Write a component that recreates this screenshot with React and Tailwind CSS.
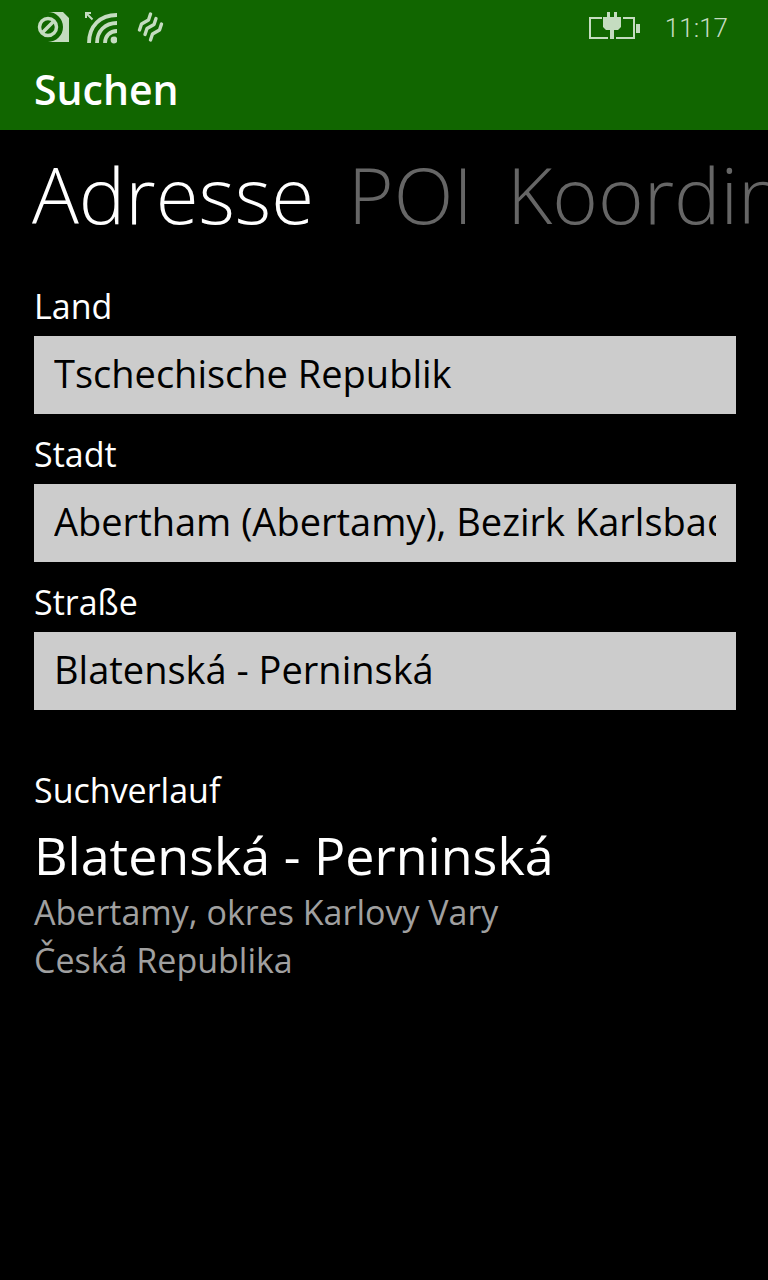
import React from "react";

const fields = [
  { id: "land", label: "Land", value: "Tschechische Republik" },
  { id: "stadt", label: "Stadt", value: "Abertham (Abertamy), Bezirk Karlsbad" },
  { id: "strasse", label: "Straße", value: "Blatenská - Perninská" },
];

const tabs = ["Adresse", "POI", "Koordinaten"];

function SimIcon() {
  return (
    <svg className="h-8 w-8" viewBox="0 0 32 32" aria-hidden="true">
      <path d="M11 0H26L32 6V30H11A15 15 0 0 0 11 0Z" fill="#c5dcc0" />
      <circle cx="11" cy="15" r="13" fill="#116600" />
      <circle cx="11" cy="15" r="8.500" fill="none" stroke="#c5dcc0" strokeWidth="3.500" />
      <path d="M5.500 20.500L16.500 9.500" stroke="#c5dcc0" strokeWidth="3.500" />
    </svg>
  );
}

function WifiIcon() {
  return (
    <svg className="h-8 w-8" viewBox="0 0 32 32" aria-hidden="true">
      <circle cx="29" cy="28" r="3.400" fill="#c5dcc0" />
      <g fill="none" stroke="#c5dcc0" strokeWidth="3.800">
        <path d="M4 31C4 14 15 3 32 3" />
        <path d="M12 31C12 19 20 11 32 11" />
        <path d="M20 31C20 24 25 19 32 19" />
        <path d="M1 6V1H6M1 1L7.500 7.500" strokeWidth="2" />
      </g>
    </svg>
  );
}

function VibrateIcon() {
  return (
    <svg className="h-8 w-8" viewBox="0 0 32 32" aria-hidden="true">
      <g fill="none" stroke="#c5dcc0" strokeWidth="3.400" strokeLinecap="round" strokeLinejoin="round">
        <path d="M17.500 2L15.500 8L8.500 12L6.500 18" />
        <path d="M23 6.500L21 12.500L14 16.500L12 22.500" />
        <path d="M28.500 12L26.500 18L19.500 22L17.500 28" />
      </g>
    </svg>
  );
}

function BatteryIcon() {
  return (
    <svg className="h-8 w-[52px]" viewBox="0 0 52 32" role="img" aria-label="Akku wird geladen">
      <g fill="none" stroke="#c5dcc0" strokeWidth="2">
        <path d="M13 6H1V26H19" />
        <path d="M34 6H45V26H27" />
      </g>
      <path d="M47 12H51V21H47Z" fill="#c5dcc0" />
      <path d="M18 0H21V5H25V0H28V5H32V15L29 18H25V27H21V18H17L14 15V5H18Z" fill="#c5dcc0" />
    </svg>
  );
}

export default function App() {
  return (
    <div className="flex min-h-screen flex-col overflow-hidden bg-black font-['Open_Sans',sans-serif] text-white">
      <header className="bg-[#116600] pb-2">
        <div className="flex h-14 items-center justify-between pr-10 pl-[37px]">
          <div className="flex items-center gap-4">
            <SimIcon />
            <WifiIcon />
            <VibrateIcon />
          </div>
          <div className="flex items-center gap-6">
            <BatteryIcon />
            <time className="font-[Roboto,sans-serif] text-[26px] leading-8 font-light text-[#c5dcc0]">11:17</time>
          </div>
        </div>
        <h1 className="px-[34px] text-[41px] leading-[66px] font-semibold">Suchen</h1>
      </header>

      <nav className="flex gap-[34px] pt-3 pl-8 whitespace-nowrap">
        {tabs.map((tab, i) => (
          <button
            key={tab}
            type="button"
            className={
              i === 0
                ? "text-[78px] leading-[104px] font-light text-white"
                : "text-[78px] leading-[104px] font-light text-[#666666]"
            }
          >
            {tab}
          </button>
        ))}
      </nav>

      <main className="px-8 pt-9 pl-[34px]">
        <form className="flex flex-col gap-4">
          {fields.map((field) => (
            <div key={field.id} className="flex flex-col gap-1.5">
              <label htmlFor={field.id} className="text-[34px] leading-[48px]">
                {field.label}
              </label>
              <input
                id={field.id}
                type="text"
                defaultValue={field.value}
                className="h-[78px] w-full rounded-none bg-[#cccccc] px-5 pb-1 text-[38px] text-black outline-none"
              />
            </div>
          ))}
        </form>

        <section className="pt-14">
          <h2 className="text-[34px] leading-[48px]">Suchverlauf</h2>
          <a href="#blatenska" className="block pt-2">
            <span className="block text-[52px] leading-[66px]">Blatenská - Perninská</span>
            <span className="block text-[34px] leading-[48px] text-[#a0a0a0]">Abertamy, okres Karlovy Vary</span>
            <span className="block text-[34px] leading-[48px] text-[#a0a0a0]">Česká Republika</span>
          </a>
        </section>
      </main>
    </div>
  );
}
